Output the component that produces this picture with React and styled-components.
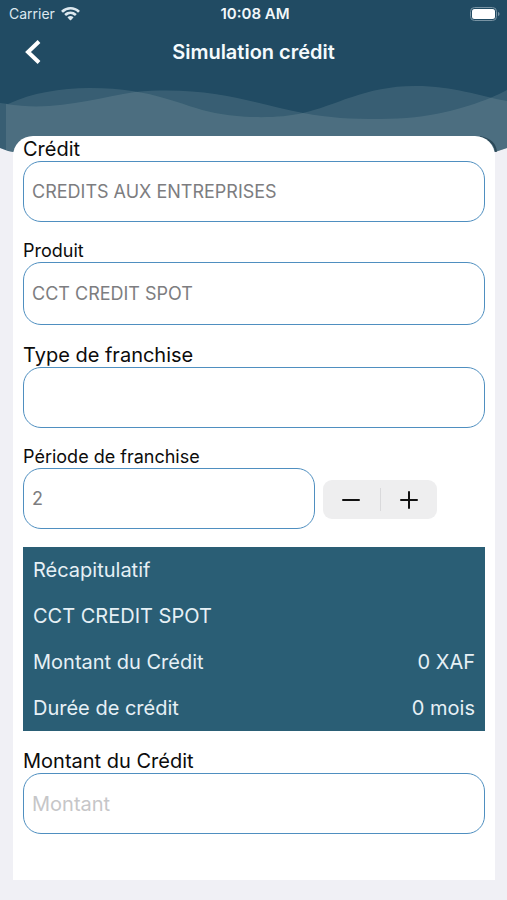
import React, { useState } from "react";
import styled, { createGlobalStyle } from "styled-components";

const GlobalStyle = createGlobalStyle`
  * {
    box-sizing: border-box;
  }

  body {
    margin: 0;
    background: #f0f0f5;
    font-family: Inter, "Liberation Sans", sans-serif;
    color: #0c0c0c;
  }
`;

const Screen = styled.div`
  min-height: 100vh;
  padding-bottom: 19px;
`;

const Header = styled.header`
  color: #ffffff;
`;

const HeaderTop = styled.div`
  background: #214b63;
`;

const StatusBar = styled.div`
  display: grid;
  grid-template-columns: 1fr auto 1fr;
  align-items: center;
  height: 27px;
  padding: 0 6px 0 9px;
  font-size: 14px;
`;

const Carrier = styled.div`
  display: flex;
  align-items: center;
  gap: 6px;
  color: #dde8ef;
`;

const Clock = styled.time`
  font-size: 15px;
  font-weight: 600;
  color: #f1f7fa;
`;

const Battery = styled.svg`
  justify-self: end;
`;

const NavBar = styled.div`
  display: grid;
  grid-template-columns: 1fr auto 1fr;
  align-items: center;
  height: 49px;
  padding: 0 24px;
`;

const BackButton = styled.button`
  display: flex;
  justify-self: start;
  padding: 0;
  border: 0;
  background: none;
  color: inherit;
  cursor: pointer;
`;

const Title = styled.h1`
  margin: 0;
  font-size: 20px;
  font-weight: 600;
  line-height: 28px;
  color: #f4fafd;
`;

const Waves = styled.svg`
  display: block;
  width: 100%;
  height: 78px;
`;

const Card = styled.main`
  position: relative;
  display: flex;
  flex-direction: column;
  gap: 18px;
  margin: -18px 12px 0 13px;
  padding: 1px 10px 46px;
  background: #ffffff;
  border-radius: 20px 20px 0 0;
`;

const Field = styled.div`
  display: flex;
  flex-direction: column;
`;

const Label = styled.label`
  font-size: ${({ $small }) => ($small ? "18px" : "20px")};
  line-height: ${({ $small }) => ($small ? "22px" : "24px")};
`;

const Input = styled.input`
  width: 100%;
  height: ${({ $tall }) => ($tall ? "63px" : "61px")};
  padding: 0 8px;
  border: 1px solid #4f8fc0;
  border-radius: 18px;
  background: #ffffff;
  font-family: inherit;
  font-size: ${({ $large }) => ($large ? "20px" : "18px")};
  color: #7d7d80;
  outline: none;

  &::placeholder {
    color: #c6c6c8;
  }
`;

const PeriodRow = styled.div`
  display: grid;
  grid-template-columns: 292fr 170fr;
  align-items: center;
`;

const Stepper = styled.div`
  display: flex;
  align-items: center;
  width: 114px;
  height: 39px;
  margin: 2px 0 0 8px;
  background: #eeeeef;
  border-radius: 9px;
`;

const StepButton = styled.button`
  display: flex;
  flex: 1;
  align-items: center;
  justify-content: center;
  height: 100%;
  padding: 0;
  border: 0;
  background: none;
  color: #111111;
  cursor: pointer;
`;

const StepDivider = styled.span`
  width: 1px;
  height: 23px;
  background: #d9d9db;
`;

const Summary = styled.section`
  display: flex;
  flex-direction: column;
  padding: 0 10px;
  background: #2a5e75;
  color: #e6f0f5;
  font-size: 20px;
`;

const SummaryRow = styled.div`
  display: flex;
  align-items: center;
  justify-content: space-between;
  min-height: 46px;
`;

const WifiIcon = () => (
  <svg width="19" height="14" viewBox="0 0 19 14" fill="currentColor">
    <path d="M9.5 0C6 0 2.8 1.3.4 3.5a.5.5 0 0 0 0 .7l1.2 1.2c.2.2.5.2.7 0A10.600 10.600 0 0 1 9.500 2.600c2.700 0 5.200 1 7.200 2.800.2.200.5.200.7 0l1.200-1.200a.5.500 0 0 0 0-.7A13.500 13.500 0 0 0 9.500 0z" />
    <path d="M9.500 4.500c-2.300 0-4.300.8-5.900 2.200a.5.500 0 0 0 0 .8l1.200 1.200c.2.200.5.200.7 0a6.100 6.100 0 0 1 8 0c.2.200.5.200.7 0l1.200-1.200a.5.500 0 0 0 0-.8 8.900 8.900 0 0 0-5.900-2.200z" />
    <path d="M9.500 9c-1 0-2 .4-2.700 1a.5.500 0 0 0 0 .8l2.300 2.400c.2.200.6.200.8 0l2.300-2.400a.5.500 0 0 0 0-.8A4.200 4.200 0 0 0 9.500 9z" />
  </svg>
);

const HeaderWaves = () => (
  <Waves viewBox="0 0 507 78" preserveAspectRatio="none" aria-hidden="true">
    <path fill="#214b63" d="M0 0H507V72Q501 74 495 76H13Q7 75 0 72Z" />
    {/* two translucent crests, darker where only one of them shows */}
    <path
      fill="#b5c6c6"
      fillOpacity="0.16"
      d="M0 27L8 28C32 17 60 12 90 12C155 12 180 30 215 37C240 42 278 43 303 37C335 30 365 10 415 10C455 10 478 20 507 25V72Q501 74 495 76H13Q7 75 0 72Z"
    />
    <path
      fill="#b5c6c6"
      fillOpacity="0.16"
      d="M6 28C55 36 95 22 135 16C210 9 255 28 303 37C330 42 350 43 380 43C430 43 465 32 490 22Q500 18 507 14V72Q501 74 495 76H13L6 74Z"
    />
    <path
      d="M480 61Q495 64 496 76"
      fill="none"
      stroke="#16303d"
      strokeOpacity="0.6"
      strokeWidth="2"
    />
  </Waves>
);

const App = () => {
  const [credit, setCredit] = useState("CREDITS AUX ENTREPRISES");
  const [product, setProduct] = useState("CCT CREDIT SPOT");
  const [franchise, setFranchise] = useState("");
  const [period, setPeriod] = useState(2);
  const [amount, setAmount] = useState("");

  return (
    <Screen>
      <GlobalStyle />
      <Header>
        <HeaderTop>
          <StatusBar>
            <Carrier>
              Carrier
              <WifiIcon />
            </Carrier>
            <Clock>10:08 AM</Clock>
            <Battery width="32" height="16" viewBox="0 0 32 16">
              <rect
                x="1.5"
                y="1.5"
                width="26"
                height="13"
                rx="4"
                fill="none"
                stroke="#7893a3"
              />
              <rect x="3" y="3" width="23" height="10" rx="2.5" fill="#fff" />
              <path d="M29 6c2 .6 2 3.4 0 4z" fill="#7893a3" />
            </Battery>
          </StatusBar>
          <NavBar>
            <BackButton type="button" aria-label="Retour">
              <svg width="18" height="26" viewBox="0 0 18 26">
                <path
                  d="M15 2.5L4 13l11 10.5"
                  fill="none"
                  stroke="currentColor"
                  strokeWidth="4"
                />
              </svg>
            </BackButton>
            <Title>Simulation crédit</Title>
          </NavBar>
        </HeaderTop>
        <HeaderWaves />
      </Header>

      <Card>
        <Field>
          <Label htmlFor="credit">Crédit</Label>
          <Input
            id="credit"
            value={credit}
            onChange={(e) => setCredit(e.target.value)}
          />
        </Field>

        <Field>
          <Label htmlFor="product" $small>
            Produit
          </Label>
          <Input
            id="product"
            $tall
            value={product}
            onChange={(e) => setProduct(e.target.value)}
          />
        </Field>

        <Field>
          <Label htmlFor="franchise">Type de franchise</Label>
          <Input
            id="franchise"
            value={franchise}
            onChange={(e) => setFranchise(e.target.value)}
          />
        </Field>

        <Field>
          <Label htmlFor="period" $small>
            Période de franchise
          </Label>
          <PeriodRow>
            <Input
              id="period"
              inputMode="numeric"
              value={period}
              onChange={(e) => setPeriod(Number(e.target.value) || 0)}
            />
            <Stepper>
              <StepButton
                type="button"
                aria-label="Diminuer"
                onClick={() => setPeriod(Math.max(0, period - 1))}
              >
                <svg width="18" height="18" viewBox="0 0 18 18">
                  <path
                    d="M1 9h16"
                    stroke="currentColor"
                    strokeWidth="2"
                    strokeLinecap="round"
                  />
                </svg>
              </StepButton>
              <StepDivider />
              <StepButton
                type="button"
                aria-label="Augmenter"
                onClick={() => setPeriod(period + 1)}
              >
                <svg width="18" height="18" viewBox="0 0 18 18">
                  <path
                    d="M1 9h16M9 1v16"
                    stroke="currentColor"
                    strokeWidth="2"
                    strokeLinecap="round"
                  />
                </svg>
              </StepButton>
            </Stepper>
          </PeriodRow>
        </Field>

        <Summary>
          <SummaryRow>Récapitulatif</SummaryRow>
          <SummaryRow>{product}</SummaryRow>
          <SummaryRow>
            <span>Montant du Crédit</span>
            <span>{Number(amount) || 0} XAF</span>
          </SummaryRow>
          <SummaryRow>
            <span>Durée de crédit</span>
            <span>0 mois</span>
          </SummaryRow>
        </Summary>

        <Field>
          <Label htmlFor="amount">Montant du Crédit</Label>
          <Input
            id="amount"
            $large
            inputMode="numeric"
            placeholder="Montant"
            value={amount}
            onChange={(e) => setAmount(e.target.value)}
          />
        </Field>
      </Card>
    </Screen>
  );
};

export default App;
